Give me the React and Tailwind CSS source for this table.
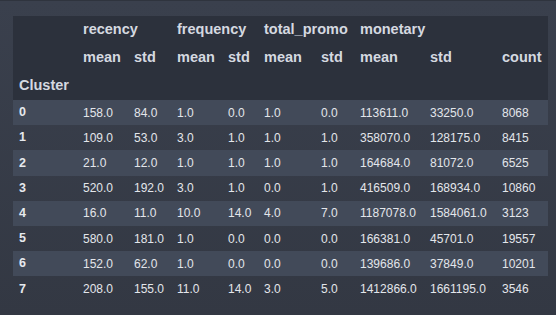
const cols = [64, 51, 43, 51, 36, 57, 39, 70, 72, 52];

const rows = [
  ['0', '158.0', '84.0', '1.0', '0.0', '1.0', '0.0', '113611.0', '33250.0', '8068'],
  ['1', '109.0', '53.0', '3.0', '1.0', '1.0', '1.0', '358070.0', '128175.0', '8415'],
  ['2', '21.0', '12.0', '1.0', '1.0', '1.0', '1.0', '164684.0', '81072.0', '6525'],
  ['3', '520.0', '192.0', '3.0', '1.0', '0.0', '1.0', '416509.0', '168934.0', '10860'],
  ['4', '16.0', '11.0', '10.0', '14.0', '4.0', '7.0', '1187078.0', '1584061.0', '3123'],
  ['5', '580.0', '181.0', '1.0', '0.0', '0.0', '0.0', '166381.0', '45701.0', '19557'],
  ['6', '152.0', '62.0', '1.0', '0.0', '0.0', '0.0', '139686.0', '37849.0', '10201'],
  ['7', '208.0', '155.0', '11.0', '14.0', '3.0', '5.0', '1412866.0', '1661195.0', '3546'],
];

const App = () => {
  return (
    <div
      className="w-[556px] h-[315px] overflow-hidden bg-gradient-to-b from-[#3a404d] to-[#333843] border-t border-[#2f343e] pt-[15px] pl-[13px]"
      style={{ fontFamily: '"Liberation Sans", Arial, sans-serif' }}
    >
      <table className="table-fixed border-collapse w-[535px]">
        <colgroup>
          {cols.map((w, i) => (
            <col key={i} style={{ width: w }} />
          ))}
        </colgroup>
        <thead className="bg-[#2c313c] text-[#d5d9e0] text-[14.5px] font-bold">
          {/* Top level column groups */}
          <tr className="h-[28px]">
            <th></th>
            <th colSpan={2} className="text-left pl-[6px] font-bold">recency</th>
            <th colSpan={2} className="text-left pl-[6px] font-bold">frequency</th>
            <th colSpan={2} className="text-left pl-[6px] font-bold">total_promo</th>
            <th colSpan={2} className="text-left pl-[6px] font-bold">monetary</th>
            <th></th>
          </tr>
          <tr className="h-[28px]">
            <th></th>
            <th className="text-left pl-[6px]">mean</th>
            <th className="text-left pl-[6px]">std</th>
            <th className="text-left pl-[6px]">mean</th>
            <th className="text-left pl-[6px]">std</th>
            <th className="text-left pl-[6px]">mean</th>
            <th className="text-left pl-[6px]">std</th>
            <th className="text-left pl-[6px]">mean</th>
            <th className="text-left pl-[6px]">std</th>
            <th className="text-left pl-[6px]">count</th>
          </tr>
          <tr className="h-[28px]">
            <th className="text-left pl-[6px]">Cluster</th>
            <th colSpan={9}></th>
          </tr>
        </thead>
        <tbody className="text-[12px] text-[#e3e6eb]">
          {rows.map((r, i) => (
            <tr key={i} className={`h-[25.2px] ${i % 2 === 0 ? 'bg-[#424a59]' : 'bg-transparent'}`}>
              {r.map((c, j) => (
                <td
                  key={j}
                  className={`text-left pl-[6px] whitespace-nowrap ${j === 0 ? 'font-bold text-[12.5px] text-[#e6e9ee]' : ''}`}
                >
                  {c}
                </td>
              ))}
            </tr>
          ))}
        </tbody>
      </table>
    </div>
  );
};

export default App;
